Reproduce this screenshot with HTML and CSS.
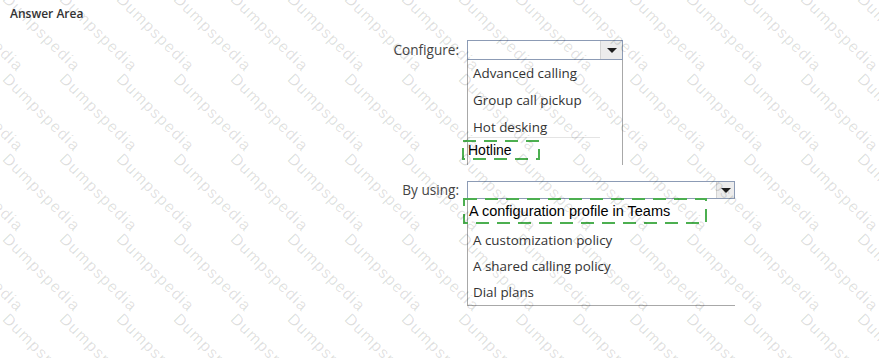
FILE: index.html
```html
<!DOCTYPE html>
<html lang="en">
<head>
<meta charset="utf-8">
<title>Answer Area</title>
<link rel="stylesheet" href="styles.css">
</head>
<body>
<div class="page">
  <div class="title">Answer Area</div>

  <div class="question q1">
    <div class="label">Configure:</div>
    <div class="dd dd1">
      <div class="select"><span class="arrow"><svg width="10" height="5" viewBox="0 0 10 5"><path d="M0 0H10L5 5Z" fill="#1e1e1e"/></svg></span></div>
      <ul class="list list1">
        <li class="item">Advanced calling</li>
        <li class="item">Group call pickup</li>
        <li class="item sep">Hot desking</li>
        <li class="answer ans1">Hotline<svg class="dash" width="78" height="20" viewBox="0 0 78 20"><rect x="1" y="1" width="76" height="18" fill="none" stroke="#4caf50" stroke-width="2" stroke-dasharray="13 8"/></svg></li>
      </ul>
    </div>
  </div>

  <div class="question q2">
    <div class="label">By using:</div>
    <div class="dd dd2">
      <div class="select"><span class="arrow"><svg width="10" height="5" viewBox="0 0 10 5"><path d="M0 0H10L5 5Z" fill="#1e1e1e"/></svg></span></div>
      <ul class="list list2">
        <li class="answer ans2">A configuration profile in Teams<svg class="dash" width="244" height="26" viewBox="0 0 244 26"><rect x="1" y="1" width="242" height="24" fill="none" stroke="#4caf50" stroke-width="2" stroke-dasharray="13 8"/></svg></li>
        <li class="item">A customization policy</li>
        <li class="item">A shared calling policy</li>
        <li class="item">Dial plans</li>
      </ul>
    </div>
  </div>

  <div class="wm" aria-hidden="true">
    <span>Dumpspedia</span><span>Dumpspedia</span><span>Dumpspedia</span><span>Dumpspedia</span><span>Dumpspedia</span><span>Dumpspedia</span><span>Dumpspedia</span><span>Dumpspedia</span><span>Dumpspedia</span><span>Dumpspedia</span><span>Dumpspedia</span><span>Dumpspedia</span><span>Dumpspedia</span><span>Dumpspedia</span><span>Dumpspedia</span><span>Dumpspedia</span><span>Dumpspedia</span>
    <span>Dumpspedia</span><span>Dumpspedia</span><span>Dumpspedia</span><span>Dumpspedia</span><span>Dumpspedia</span><span>Dumpspedia</span><span>Dumpspedia</span><span>Dumpspedia</span><span>Dumpspedia</span><span>Dumpspedia</span><span>Dumpspedia</span><span>Dumpspedia</span><span>Dumpspedia</span><span>Dumpspedia</span><span>Dumpspedia</span><span>Dumpspedia</span><span>Dumpspedia</span>
    <span>Dumpspedia</span><span>Dumpspedia</span><span>Dumpspedia</span><span>Dumpspedia</span><span>Dumpspedia</span><span>Dumpspedia</span><span>Dumpspedia</span><span>Dumpspedia</span><span>Dumpspedia</span><span>Dumpspedia</span><span>Dumpspedia</span><span>Dumpspedia</span><span>Dumpspedia</span><span>Dumpspedia</span><span>Dumpspedia</span><span>Dumpspedia</span><span>Dumpspedia</span>
    <span>Dumpspedia</span><span>Dumpspedia</span><span>Dumpspedia</span><span>Dumpspedia</span><span>Dumpspedia</span><span>Dumpspedia</span><span>Dumpspedia</span><span>Dumpspedia</span><span>Dumpspedia</span><span>Dumpspedia</span><span>Dumpspedia</span><span>Dumpspedia</span><span>Dumpspedia</span><span>Dumpspedia</span><span>Dumpspedia</span><span>Dumpspedia</span><span>Dumpspedia</span>
    <span>Dumpspedia</span><span>Dumpspedia</span><span>Dumpspedia</span><span>Dumpspedia</span><span>Dumpspedia</span><span>Dumpspedia</span><span>Dumpspedia</span><span>Dumpspedia</span><span>Dumpspedia</span><span>Dumpspedia</span><span>Dumpspedia</span><span>Dumpspedia</span><span>Dumpspedia</span><span>Dumpspedia</span><span>Dumpspedia</span><span>Dumpspedia</span><span>Dumpspedia</span>
    <span>Dumpspedia</span><span>Dumpspedia</span><span>Dumpspedia</span><span>Dumpspedia</span><span>Dumpspedia</span><span>Dumpspedia</span><span>Dumpspedia</span><span>Dumpspedia</span><span>Dumpspedia</span><span>Dumpspedia</span><span>Dumpspedia</span><span>Dumpspedia</span><span>Dumpspedia</span><span>Dumpspedia</span><span>Dumpspedia</span><span>Dumpspedia</span><span>Dumpspedia</span>
  </div>
</div>
</body>
</html>
```
FILE: styles.css
```css
html, body {
  margin: 0;
  padding: 0;
  background: #ffffff;
}

.page {
  position: relative;
  width: 879px;
  height: 358px;
  overflow: hidden;
  font-family: "Open Sans", "Noto Sans", sans-serif;
}

.title {
  padding: 5px 0 0 10px;
  font-size: 12px;
  font-weight: 600;
  line-height: 18px;
  color: #333333;
}

.question {
  display: grid;
  grid-template-columns: 459px auto;
  column-gap: 8px;
  align-items: start;
}

.q1 { margin-top: 17px; }
.q2 { margin-top: 16px; }

.label {
  text-align: right;
  font-size: 13.6px;
  color: #444444;
}

.q1 .label { line-height: 20px; }
.q2 .label { line-height: 18px; }

.select {
  box-sizing: border-box;
  border: 1px solid #8c9bb5;
  display: flex;
  justify-content: flex-end;
  background: #ffffff;
}

.dd1 { width: 156px; }
.dd2 { width: 268px; }

.dd1 .select { height: 20px; }
.dd2 .select { height: 18px; }

.arrow {
  width: 21px;
  background: #ececec;
  border-left: 1px solid #d4d4d4;
  display: flex;
  align-items: center;
  justify-content: center;
}

.dd2 .arrow { width: 17px; }

.list {
  list-style: none;
  margin: 0;
  padding: 0;
  box-sizing: border-box;
}

.list1 {
  border-left: 1px solid #a8a8a8;
  border-right: 1px solid #a8a8a8;
  padding-bottom: 6px;
}

.list2 {
  border-left: 1px solid #a8a8a8;
  border-bottom: 1px solid #a8a8a8;
}

.item {
  height: 27px;
  line-height: 27px;
  padding-left: 5px;
  font-size: 13.4px;
  color: #333333;
  white-space: nowrap;
}

.list2 .item {
  height: 26px;
  line-height: 26px;
}

.sep {
  position: relative;
}

.sep::after {
  content: "";
  position: absolute;
  left: 0;
  right: 22px;
  bottom: 3px;
  border-bottom: 1px solid #e4e4e4;
}

.answer {
  position: relative;
  font-family: "Liberation Sans", Arial, sans-serif;
  font-size: 14px;
  color: #000000;
  white-space: nowrap;
}

.ans1 {
  height: 18px;
  line-height: 18px;
  padding-left: 0;
}

.ans2 {
  height: 28px;
  padding-top: 3px;
  box-sizing: border-box;
  line-height: 18px;
  padding-left: 1px;
  font-size: 14.5px;
}

.dash {
  position: absolute;
  display: block;
}

.ans1 .dash {
  left: -6px;
  top: -1px;
}

.ans2 .dash {
  left: -5px;
  top: -1px;
}

.wm {
  position: absolute;
  left: -55px;
  top: -88px;
  display: grid;
  grid-template-columns: repeat(17, 57px);
  grid-auto-rows: 80px;
  pointer-events: none;
  z-index: 5;
}

.wm span {
  display: block;
  width: 0;
  white-space: nowrap;
  font-family: "Liberation Sans", Arial, sans-serif;
  font-size: 16px;
  line-height: 16px;
  letter-spacing: 1.3px;
  color: rgba(0, 0, 0, 0.13);
  transform: translate(8.6px, -1.3px) rotate(45deg);
  transform-origin: 0 0;
}
```
